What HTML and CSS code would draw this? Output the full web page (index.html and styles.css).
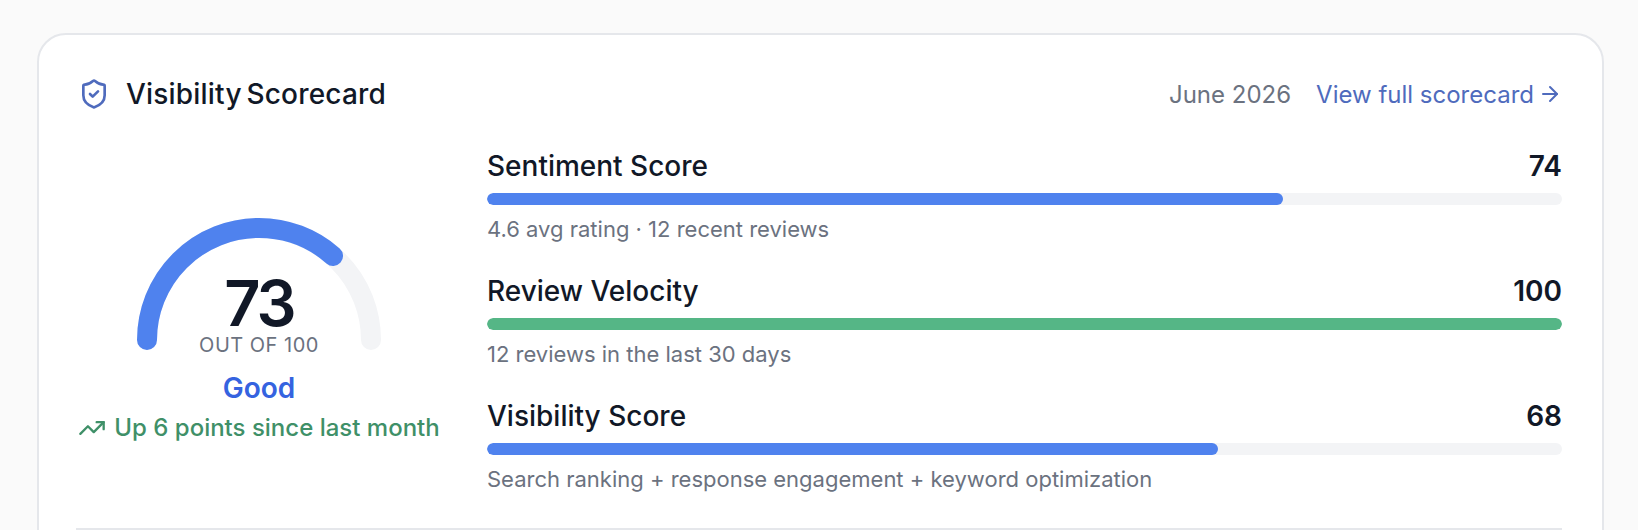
FILE: index.html
```html
<!DOCTYPE html>
<html lang="en">
<head>
  <meta charset="UTF-8">
  <title>Visibility Scorecard</title>
  <meta name="viewport" content="width=device-width, initial-scale=1.0">
  <link rel="stylesheet" href="styles.css">
</head>
<body>

  <div class="card">
    <!-- Header -->
    <div class="card-header">
      <div class="card-title">
        <svg class="shield-icon" viewBox="0 0 24 24" fill="none" stroke="currentColor" stroke-width="2" stroke-linecap="round" stroke-linejoin="round">
          <path d="M20 13c0 5-3.5 7.5-7.66 8.95a1 1 0 0 1-.67-.01C7.5 20.5 4 18 4 13V6a1 1 0 0 1 1-1c2 0 4.5-1.2 6.24-2.72a1.17 1.17 0 0 1 1.52 0C14.51 3.81 17 5 19 5a1 1 0 0 1 1 1z"/>
          <path d="m9 12 2 2 4-4"/>
        </svg>
        <h2>Visibility Scorecard</h2>
      </div>
      <div class="card-meta">
        <span class="month">June 2026</span>
        <a class="full-link" href="#">View full scorecard
          <svg class="arrow-icon" viewBox="0 0 24 24" fill="none" stroke="currentColor" stroke-width="2" stroke-linecap="round" stroke-linejoin="round">
            <path d="M5 12h14"/>
            <path d="m12 5 7 7-7 7"/>
          </svg>
        </a>
      </div>
    </div>

    <div class="card-body">
      <!-- Gauge -->
      <div class="gauge-col">
        <div class="gauge">
          <svg class="gauge-svg" viewBox="0 0 244 132" fill="none" stroke-width="20" stroke-linecap="round">
            <path class="gauge-track" d="M10 122A112 112 0 0 1 234 122"/>
            <path class="gauge-fill" d="M10 122A112 112 0 0 1 234 122" pathLength="100" stroke-dasharray="73 100"/>
          </svg>
          <div class="gauge-text">
            <div class="gauge-num">73</div>
            <div class="gauge-sub">OUT OF 100</div>
          </div>
        </div>
        <div class="gauge-label">Good</div>
        <div class="trend">
          <svg class="trend-icon" viewBox="0 0 24 24" fill="none" stroke="currentColor" stroke-width="2" stroke-linecap="round" stroke-linejoin="round">
            <path d="M22 7 13.5 15.5l-5-5L2 17"/>
            <path d="M16 7h6v6"/>
          </svg>
          Up 6 points since last month
        </div>
      </div>

      <!-- Metrics -->
      <div class="metrics">
        <div class="metric">
          <div class="metric-top"><span>Sentiment Score</span><span class="metric-val">74</span></div>
          <div class="bar"><div class="bar-fill blue" style="width: 74%"></div></div>
          <div class="metric-note">4.6 avg rating · 12 recent reviews</div>
        </div>
        <div class="metric">
          <div class="metric-top"><span>Review Velocity</span><span class="metric-val">100</span></div>
          <div class="bar"><div class="bar-fill green" style="width: 100%"></div></div>
          <div class="metric-note">12 reviews in the last 30 days</div>
        </div>
        <div class="metric">
          <div class="metric-top"><span>Visibility Score</span><span class="metric-val">68</span></div>
          <div class="bar"><div class="bar-fill blue" style="width: 68%"></div></div>
          <div class="metric-note">Search ranking + response engagement + keyword optimization</div>
        </div>
      </div>
    </div>

    <div class="divider"></div>
  </div>

</body>
</html>
```

FILE: styles.css
```css
* {
  box-sizing: border-box;
}

html, body {
  height: 530px;
  overflow: hidden;
}

body {
  margin: 0;
  padding: 33px 34px 0 37px;
  background: #fafafa;
  color: #111827;
  font-family: "Inter", sans-serif;
}

.card {
  background: white;
  border: 2px solid #e5e7eb;
  border-radius: 29px;
  padding: 37px 40px 0 37px;
  height: 600px;
}

.card-header {
  display: flex;
  justify-content: space-between;
  align-items: center;
  height: 44px;
}

.card-title {
  display: flex;
  align-items: center;
  gap: 16px;
  margin-left: 2px;
}

.shield-icon {
  width: 32px;
  height: 32px;
  color: #4f6bbd;
}

h2 {
  margin: 0;
  font-size: 28px;
  font-weight: 500;
  letter-spacing: 0.2px;
  word-spacing: -3px;
}

.card-meta {
  display: flex;
  align-items: center;
  gap: 25px;
  font-size: 24px;
}

.month {
  color: #6b7280;
}

.full-link {
  display: flex;
  align-items: center;
  gap: 4px;
  color: #4f6bbd;
  text-decoration: none;
}

.arrow-icon {
  width: 24px;
  height: 24px;
}

.card-body {
  display: grid;
  grid-template-columns: 366px 1fr;
  gap: 45px;
  margin-top: 32px;
}

.gauge-col {
  display: flex;
  flex-direction: column;
  align-items: center;
  justify-content: center;
  padding-top: 20px;
}

.gauge {
  position: relative;
  width: 244px;
  height: 132px;
}

.gauge-svg {
  display: block;
  width: 244px;
  height: 132px;
}

.gauge-track {
  stroke: #f3f4f6;
}

.gauge-fill {
  stroke: #4f82ee;
}

.gauge-text {
  position: absolute;
  left: 0;
  right: 0;
  bottom: -7px;
  text-align: center;
}

.gauge-num {
  font-size: 63px;
  font-weight: 600;
  line-height: 60px;
  letter-spacing: -3px;
}

.gauge-sub {
  font-size: 20px;
  line-height: 24px;
  color: #6b7280;
  letter-spacing: 0.5px;
}

.gauge-label {
  margin-top: 20px;
  font-size: 28px;
  font-weight: 600;
  line-height: 36px;
  color: #3563e0;
}

.trend {
  display: flex;
  align-items: center;
  gap: 8px;
  margin-top: 7px;
  font-size: 24px;
  font-weight: 500;
  line-height: 30px;
  color: #3f9068;
}

.trend-icon {
  width: 28px;
  height: 28px;
}

.metrics {
  display: flex;
  flex-direction: column;
  gap: 30px;
}

.metric-top {
  display: flex;
  justify-content: space-between;
  font-size: 28px;
  font-weight: 500;
  line-height: 36px;
}

.metric-val {
  font-weight: 600;
}

.bar {
  height: 12px;
  margin-top: 9px;
  background: #f3f4f6;
  border-radius: 6px;
  overflow: hidden;
}

.bar-fill {
  height: 100%;
  border-radius: 6px;
}

.blue {
  background: #4f82ee;
}

.green {
  background: #55b686;
}

.metric-note {
  margin-top: 10px;
  font-size: 22px;
  line-height: 28px;
  color: #6b7280;
}

.divider {
  height: 2px;
  margin-top: 35px;
  background: #e5e7eb;
}
```
